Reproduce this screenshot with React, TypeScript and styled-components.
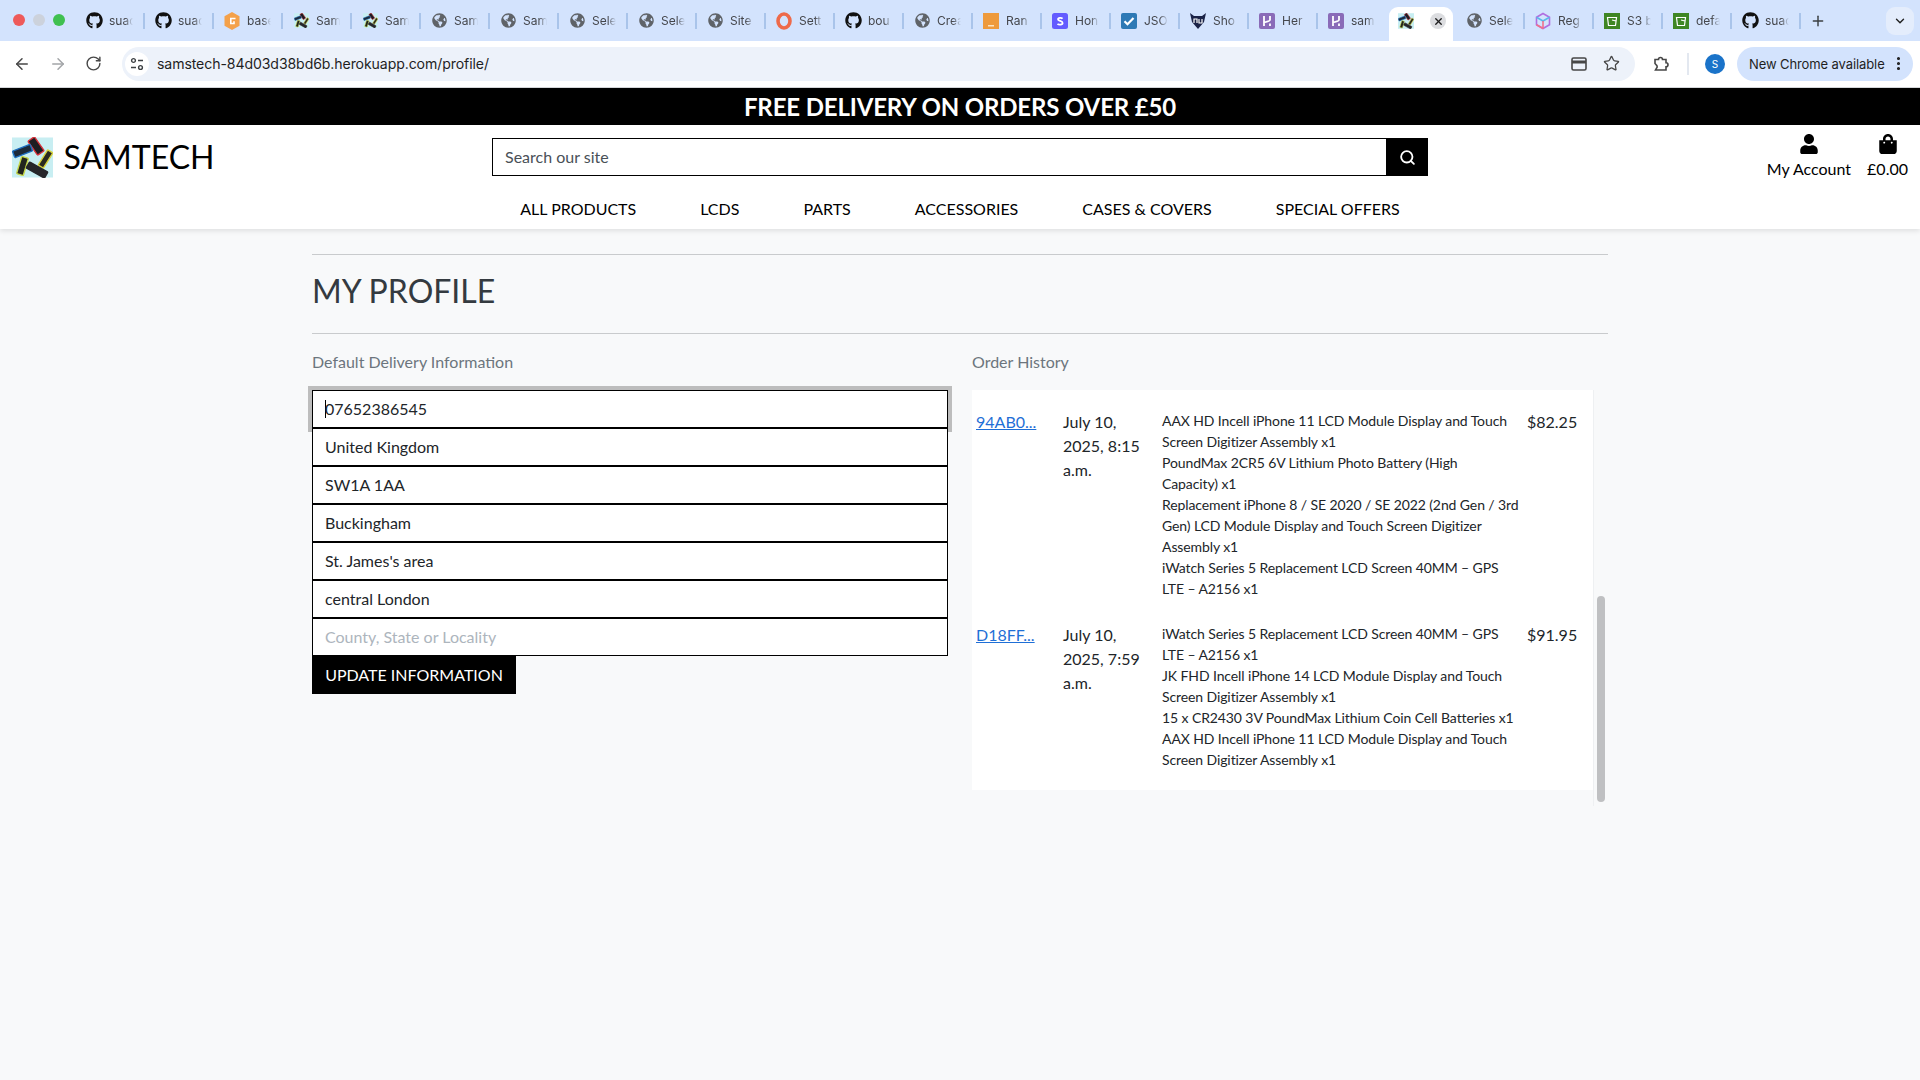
import React from "react";
import styled, { createGlobalStyle } from "styled-components";
import { FaGithub, FaGlobeAmericas, FaUser, FaShoppingBag } from "react-icons/fa";
import { ArrowLeft, ArrowRight, RotateCw, Star, Plus, ChevronDown, X, EllipsisVertical, Search } from "lucide-react";

const GlobalStyle = createGlobalStyle`
  html, body { margin: 0; padding: 0; background: #f8f9fa; }
  body { font-family: Lato, "Open Sans", sans-serif; font-size: 16px; color: #212529; height: 1080px; overflow: hidden; }
  * { box-sizing: border-box; }
`;

const Page = styled.div`display: flex; flex-direction: column; height: 1080px;`;

/* Browser chrome */
const TabStrip = styled.div`height: 41px; background: #d3e3fd; display: flex; align-items: flex-end; flex: none;`;
const Lights = styled.div`width: 76px; height: 41px; flex: none; display: flex; gap: 8px; align-items: center; padding: 0 0 2px 13px;`;
const Light = styled.span<{ $c: string }>`width: 12px; height: 12px; border-radius: 50%; background: ${p => p.$c};`;
const Tab = styled.div`width: 69px; height: 41px; flex: none; display: flex; align-items: center; gap: 6px; padding-left: 9px;`;
const IconSlot = styled.span`width: 18px; height: 18px; flex: none; display: flex; align-items: center; justify-content: center;`;
const TabLabel = styled.span`
  font: 12px Inter, "Liberation Sans", sans-serif; color: #45474c; width: 24px; overflow: hidden; white-space: nowrap; flex: none;
  -webkit-mask-image: linear-gradient(to right, #000 65%, transparent 100%);
  mask-image: linear-gradient(to right, #000 65%, transparent 100%);
`;
const TabSep = styled.span<{ $hidden?: boolean }>`width: 2px; height: 16px; margin-left: auto; flex: none; background: ${p => (p.$hidden ? "transparent" : "#a9c4ea")};`;
const ActiveTab = styled.div`
  width: 64px; height: 34px; flex: none; margin: 0 3px 0 2px; background: #fff; border-radius: 9px 9px 0 0;
  display: flex; align-items: center; justify-content: space-between; padding: 0 7px 6px 9px;
`;
const CloseDot = styled.span`width: 16px; height: 16px; border-radius: 50%; background: #dcdde0; display: flex; align-items: center; justify-content: center; color: #1f1f1f;`;
const NewTab = styled.div`width: 36px; height: 41px; flex: none; display: flex; align-items: center; justify-content: center; color: #3c4043; padding-right: 2px;`;
const StripEnd = styled.div`flex: 1; height: 41px; display: flex; justify-content: flex-end; align-items: center; padding: 0 6px 0 0;`;
const TabListBtn = styled.div`width: 28px; height: 28px; background: #e4edfc; border-radius: 9px; display: flex; align-items: center; justify-content: center; color: #1f1f1f;`;

const Toolbar = styled.div`height: 47px; flex: none; background: #fff; border-bottom: 1px solid #d4d6d9; display: flex; align-items: center; padding: 0 7px 1px 13px;`;
const NavIcons = styled.div`display: flex; gap: 18px; width: 109px; flex: none; color: #474747;`;
const NavIcon = styled.span<{ $off?: boolean }>`display: flex; color: ${p => (p.$off ? "#a3a5a8" : "#474747")};`;
const Omnibox = styled.div`width: 1513px; flex: none; height: 34px; border-radius: 17px; background: #edf2fa; display: flex; align-items: center; padding: 0 15px 0 3px;`;
const SiteChip = styled.span`width: 24px; height: 24px; border-radius: 50%; background: #fff; flex: none; display: flex; align-items: center; justify-content: center; color: #3c4043;`;
const Url = styled.span`font: 14.1px Inter, "Liberation Sans", sans-serif; color: #1f1f1f; margin-left: 8px; flex: 1; letter-spacing: -0.1px;`;
const OmniIcons = styled.div`display: flex; gap: 16px; align-items: center; color: #474747;`;
const ToolGroup = styled.div`flex: 1; display: flex; align-items: center; padding-left: 17px;`;
const Divider = styled.span`width: 2px; height: 22px; background: #e3e8f0; margin: 0 16px 0 17px;`;
const Avatar = styled.span`width: 20px; height: 20px; border-radius: 50%; background: #1a73c9; color: #fff; font: 10px Inter, sans-serif; display: flex; align-items: center; justify-content: center; margin-right: 12px;`;
const UpdatePill = styled.div`width: 176px; height: 34px; border-radius: 17px; background: #d3e3fd; display: flex; align-items: center; justify-content: space-between; padding: 0 6px 0 12px; font: 13px Inter, "Liberation Sans", sans-serif; color: #1f1f1f; white-space: nowrap; letter-spacing: -0.1px;`;

/* Site header */
const Banner = styled.div`height: 37px; flex: none; background: #000; color: #fff; display: flex; align-items: center; justify-content: center; font-size: 24px; font-weight: 700; letter-spacing: -0.15px; padding-bottom: 1px;`;
const SiteHeader = styled.header`height: 104px; flex: none; background: #fff; box-shadow: 0 2px 5px rgba(0,0,0,.1); display: flex; flex-direction: column;`;
const HeaderTop = styled.div`height: 63px; display: grid; grid-template-columns: 492px 936px 1fr; flex: none;`;
const Brand = styled.div`display: flex; align-items: flex-start; padding: 12px 0 0 12px; gap: 11px;`;
const BrandName = styled.span`font-size: 32px; line-height: 40px; color: #000; margin-left: -0.5px;`;
const SearchForm = styled.div`display: flex; margin-top: 13px; height: 38px;`;
const SearchInput = styled.div`flex: 1; border: 1px solid #000; border-right: none; background: #fff; color: #495057; font-size: 16px; display: flex; align-items: center; padding: 0 0 2px 12px;`;
const SearchBtn = styled.div`width: 42px; background: #000; color: #fff; display: flex; align-items: center; justify-content: center;`;
const Account = styled.div`display: flex; justify-content: flex-end; gap: 16px; padding: 9px 12px 0 0;`;
const AccountItem = styled.div`display: flex; flex-direction: column; align-items: center; color: #000; font-size: 16px; line-height: 20px; gap: 5px;`;
const Nav = styled.nav`display: flex; justify-content: center; padding-top: 10px;`;
const NavLink = styled.a`padding: 0 32px; font-size: 16px; line-height: 22px; color: #000; white-space: nowrap;`;

/* Content */
const Main = styled.main`width: 1296px; margin-left: 312px; padding-top: 25px;`;
const Rule = styled.div`height: 1px; background: #c9cbcd;`;
const Heading = styled.h1`margin: 0; font-size: 32px; font-weight: 400; line-height: 40px; color: #343a40; height: 78px; padding-top: 16px;`;
const Columns = styled.div`display: grid; grid-template-columns: 636px 636px; column-gap: 24px; padding-top: 16px;`;
const ColLabel = styled.p`margin: 0 0 16px; color: #6c757d; font-size: 16px; line-height: 24px;`;
const FormStack = styled.div`display: flex; flex-direction: column; align-items: flex-start;`;
const FieldBox = styled.div<{ $focus?: boolean; $ph?: boolean }>`
  width: 636px; height: 38px; border: 1px solid #000; background: #fff; flex: none;
  display: flex; align-items: center; padding: 0 0 1px 12px; font-size: 16px;
  color: ${p => (p.$ph ? "#adb5bd" : "#212529")};
  ${p => p.$focus && "box-shadow: 0 0 0 4px #bdbdbd;"}
`;
const Caret = styled.span`width: 1px; height: 18px; background: #000; margin-right: -1px; flex: none;`;
const UpdateBtn = styled.div`width: 204px; height: 38px; background: #000; color: #fff; display: flex; align-items: center; justify-content: center; font-size: 16px; white-space: nowrap; padding-bottom: 1px;`;
const OrderBox = styled.div`display: flex; height: 416px; width: 636px;`;
const TableWrap = styled.div`width: 621px; height: 400px; background: #fff; flex: none; padding: 8px 0 6px;`;
const OrderTable = styled.table`border-collapse: collapse; width: 621px; table-layout: fixed;`;
const Cell = styled.td<{ $w: number }>`width: ${p => p.$w}px; padding: 12px 4px; vertical-align: top; font-size: 16px; line-height: 24px; color: #212529;`;
const ItemCell = styled(Cell)`font-size: 14px; line-height: 21px; padding-right: 0; letter-spacing: -0.1px; white-space: nowrap;`;
const OrderLink = styled.a`color: #1f6fd6; text-decoration: underline; font-size: 16px;`;
const ItemLine = styled.div``;
const Track = styled.div`width: 15px; height: 416px; flex: none; border-left: 1px solid #eef0f2; padding: 206px 3px 4px 3px; display: flex;`;
const Thumb = styled.div`flex: 1; background: #bfc0c2; border-radius: 4px;`;

const Globe = () => <FaGlobeAmericas size={15} color="#5f6368" />;
const Git = () => <FaGithub size={17} color="#111" />;

const phones: [number, number, number, number, number, string, string][] = [
  [24, 8.5, 8, 17, -35, "#1d1d22", "#d8323c"],
  [10.5, 13.5, 7, 19, 69, "#1d2a3a", "#1f6fc0"],
  [33.5, 21.5, 6, 18, 32, "#2a2a20", "#d7d23c"],
  [10.5, 28.5, 7, 18, 17, "#22241e", "#c7d84a"],
  [25, 32.5, 7, 21, -61, "#26262a", "#26262a"],
];

const SamLogo = ({ size }: { size: number }) => (
  <svg width={size} height={size} viewBox="0 0 41 40" style={{ flex: "none" }}>
    <rect width="41" height="40" fill="#c8eef2" />
    {phones.map(([cx, cy, w, h, a, fill, stroke]) => (
      <rect key={cx * cy} x={cx - w / 2} y={cy - h / 2} width={w} height={h} rx="1" fill={fill} stroke={stroke} strokeWidth="1.4" transform={`rotate(${a} ${cx} ${cy})`} />
    ))}
  </svg>
);

const Orange = () => (
  <svg width="16" height="18" viewBox="0 0 16 18"><path d="M8 0l7.5 4.3v9.4L8 18 .5 13.7V4.3z" fill="#f4a14a" /><path d="M11.5 6.5H6.8v5h3.2V9.2" fill="none" stroke="#fff" strokeWidth="1.6" /></svg>
);
const Ring = () => <svg width="16" height="18" viewBox="0 0 16 18"><ellipse cx="8" cy="9" rx="6" ry="7" fill="none" stroke="#ee6a4a" strokeWidth="3.6" /></svg>;
const KeyIcon = () => <svg width="16" height="16" viewBox="0 0 16 16"><rect width="16" height="16" fill="#ee9a3c" /><rect x="5" y="12" width="6" height="1.5" fill="#fde3bf" /></svg>;
const PurpleS = () => (
  <svg width="16" height="16" viewBox="0 0 16 16"><rect width="16" height="16" rx="2.5" fill="#635bff" /><path d="M10.6 5.6C9.6 4.6 6 4.4 6 6.3c0 2 4.6 1.3 4.6 3.7 0 2-3.8 2-5.1.8" fill="none" stroke="#fff" strokeWidth="1.8" /></svg>
);
const Check = () => (
  <svg width="16" height="16" viewBox="0 0 16 16"><rect width="16" height="16" rx="2" fill="#2d79b5" /><path d="M3.5 8.2l3 3 6-6.2" fill="none" stroke="#fff" strokeWidth="2.2" /></svg>
);
const Nu = () => (
  <svg width="18" height="18" viewBox="0 0 18 18"><path d="M1 1l4 3h8l4-3-2 9-6 7-6-7z" fill="#1b2347" /><path d="M5 11V7h3v4M10 7v4h3V7" fill="none" stroke="#fff" strokeWidth="1.2" /></svg>
);
const Heroku = () => (
  <svg width="16" height="16" viewBox="0 0 16 16"><rect width="16" height="16" rx="2" fill="#8a6bb8" /><path d="M5 3v10M11 3v4c0 1-2 1.5-6 2.5M11 10.5V13" fill="none" stroke="#fff" strokeWidth="1.8" /></svg>
);
const Cube = () => (
  <svg width="18" height="18" viewBox="0 0 18 18" fill="none" strokeWidth="1.6"><path d="M9 1.5l6.5 3.7v7.6L9 16.5l-6.5-3.7V5.2z" stroke="#b06ee0" /><path d="M2.5 5.2L9 9l6.5-3.8" stroke="#5cb8e8" /><path d="M9 9v7.5" stroke="#f0708c" /><path d="M9 16.5l-6.5-3.7" stroke="#f0708c" /></svg>
);
const Bucket = () => (
  <svg width="16" height="16" viewBox="0 0 16 16"><rect width="16" height="16" fill="#3f8624" /><path d="M3.5 4.5h9l-1 8h-7zM8 7l4 1" fill="none" stroke="#fff" strokeWidth="1.2" /></svg>
);

const leftTabs: [React.ReactNode, string][] = [
  [<Git />, "suad"], [<Git />, "suad"], [<Orange />, "base"], [<SamLogo size={15} />, "Sam"], [<SamLogo size={15} />, "Sam"],
  [<Globe />, "Sam"], [<Globe />, "Sam"], [<Globe />, "Sele"], [<Globe />, "Sele"], [<Globe />, "Site"], [<Ring />, "Sett"],
  [<Git />, "bou"], [<Globe />, "Crea"], [<KeyIcon />, "Ran"], [<PurpleS />, "Hon"], [<Check />, "JSO"], [<Nu />, "Sho"],
  [<Heroku />, "Her"], [<Heroku />, "sam"],
];
const rightTabs: [React.ReactNode, string][] = [
  [<Globe />, "Sele"], [<Cube />, "Reg"], [<Bucket />, "S3 b"], [<Bucket />, "defa"], [<Git />, "suad"],
];

const orders = [
  {
    id: "94AB0...", date: "July 10, 2025, 8:15 a.m.", total: "$82.25",
    lines: [
      "AAX HD Incell iPhone 11 LCD Module Display and Touch",
      "Screen Digitizer Assembly x1",
      "PoundMax 2CR5 6V Lithium Photo Battery (High",
      "Capacity) x1",
      "Replacement iPhone 8 / SE 2020 / SE 2022 (2nd Gen / 3rd",
      "Gen) LCD Module Display and Touch Screen Digitizer",
      "Assembly x1",
      "iWatch Series 5 Replacement LCD Screen 40MM – GPS",
      "LTE – A2156 x1",
    ],
  },
  {
    id: "D18FF...", date: "July 10, 2025, 7:59 a.m.", total: "$91.95",
    lines: [
      "iWatch Series 5 Replacement LCD Screen 40MM – GPS",
      "LTE – A2156 x1",
      "JK FHD Incell iPhone 14 LCD Module Display and Touch",
      "Screen Digitizer Assembly x1",
      "15 x CR2430 3V PoundMax Lithium Coin Cell Batteries x1",
      "AAX HD Incell iPhone 11 LCD Module Display and Touch",
      "Screen Digitizer Assembly x1",
    ],
  },
];

const fields = ["United Kingdom", "SW1A 1AA", "Buckingham", "St. James's area", "central London"];
const navItems = ["ALL PRODUCTS", "LCDS", "PARTS", "ACCESSORIES", "CASES & COVERS", "SPECIAL OFFERS"];

export default function App() {
  return (
    <Page>
      <GlobalStyle />
      <TabStrip>
        <Lights>
          <Light $c="#ee5a5a" /><Light $c="#ccd2dc" /><Light $c="#3fc050" />
        </Lights>
        {leftTabs.map(([icon, label], i) => (
          <Tab key={i}>
            <IconSlot>{icon}</IconSlot>
            <TabLabel>{label}</TabLabel>
            <TabSep $hidden={i === leftTabs.length - 1} />
          </Tab>
        ))}
        <ActiveTab>
          <SamLogo size={16} />
          <CloseDot><X size={11} strokeWidth={3} /></CloseDot>
        </ActiveTab>
        {rightTabs.map(([icon, label], i) => (
          <Tab key={i}>
            <IconSlot>{icon}</IconSlot>
            <TabLabel>{label}</TabLabel>
            <TabSep />
          </Tab>
        ))}
        <NewTab><Plus size={16} strokeWidth={2.2} /></NewTab>
        <StripEnd>
          <TabListBtn><ChevronDown size={14} strokeWidth={2.4} /></TabListBtn>
        </StripEnd>
      </TabStrip>
      <Toolbar>
        <NavIcons>
          <NavIcon><ArrowLeft size={18} /></NavIcon>
          <NavIcon $off><ArrowRight size={18} /></NavIcon>
          <NavIcon><RotateCw size={17} /></NavIcon>
        </NavIcons>
        <Omnibox>
          <SiteChip>
            <svg width="14" height="14" viewBox="0 0 14 14" fill="none" stroke="#3c4043" strokeWidth="1.4">
              <circle cx="3.5" cy="3.5" r="1.9" /><path d="M8 3.5h5M1 10.5h5" /><circle cx="10.5" cy="10.5" r="1.9" />
            </svg>
          </SiteChip>
          <Url>samstech-84d03d38bd6b.herokuapp.com/profile/</Url>
          <OmniIcons>
            <svg width="16" height="14" viewBox="0 0 16 14" fill="none" stroke="#474747" strokeWidth="1.6">
              <rect x="1" y="1" width="14" height="12" rx="1.5" /><rect x="1" y="3.5" width="14" height="3" fill="#474747" stroke="none" />
            </svg>
            <Star size={17} strokeWidth={1.8} />
          </OmniIcons>
        </Omnibox>
        <ToolGroup>
          <svg width="18" height="18" viewBox="0 0 18 18" fill="none" stroke="#474747" strokeWidth="1.6">
            <path d="M3 4.5h3.5a2 2 0 0 1 4 0H14v3.2a2 2 0 0 1 0 4V15H3.5l1-1.8a2 2 0 0 0 0-3L3 8.5z" />
          </svg>
          <Divider />
          <Avatar>S</Avatar>
          <UpdatePill>
            New Chrome available
            <EllipsisVertical size={17} strokeWidth={2.4} />
          </UpdatePill>
        </ToolGroup>
      </Toolbar>

      <Banner>FREE DELIVERY ON ORDERS OVER £50</Banner>
      <SiteHeader>
        <HeaderTop>
          <Brand>
            <SamLogo size={41} />
            <BrandName>SAMTECH</BrandName>
          </Brand>
          <SearchForm>
            <SearchInput>Search our site</SearchInput>
            <SearchBtn><Search size={17} strokeWidth={2.6} /></SearchBtn>
          </SearchForm>
          <Account>
            <AccountItem><FaUser size={20} />My Account</AccountItem>
            <AccountItem><FaShoppingBag size={20} />£0.00</AccountItem>
          </Account>
        </HeaderTop>
        <Nav>
          {navItems.map(n => <NavLink key={n}>{n}</NavLink>)}
        </Nav>
      </SiteHeader>

      <Main>
        <Rule />
        <Heading>MY PROFILE</Heading>
        <Rule />
        <Columns>
          <div>
            <ColLabel>Default Delivery Information</ColLabel>
            <FormStack>
              <FieldBox $focus><Caret />07652386545</FieldBox>
              {fields.map(f => <FieldBox key={f}>{f}</FieldBox>)}
              <FieldBox $ph>County, State or Locality</FieldBox>
              <UpdateBtn>UPDATE INFORMATION</UpdateBtn>
            </FormStack>
          </div>
          <div>
            <ColLabel>Order History</ColLabel>
            <OrderBox>
              <TableWrap>
                <OrderTable>
                  <tbody>
                    {orders.map(o => (
                      <tr key={o.id}>
                        <Cell $w={87}><OrderLink>{o.id}</OrderLink></Cell>
                        <Cell $w={99}>{o.date}</Cell>
                        <ItemCell $w={365}>
                          {o.lines.map((l, i) => <ItemLine key={i}>{l}</ItemLine>)}
                        </ItemCell>
                        <Cell $w={70}>{o.total}</Cell>
                      </tr>
                    ))}
                  </tbody>
                </OrderTable>
              </TableWrap>
              <Track><Thumb /></Track>
            </OrderBox>
          </div>
        </Columns>
      </Main>
    </Page>
  );
}
